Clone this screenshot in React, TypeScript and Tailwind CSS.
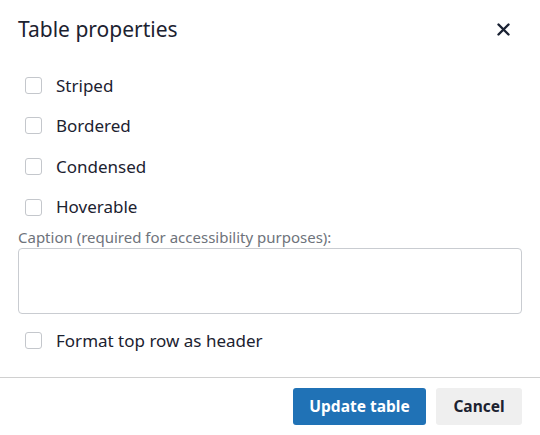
import React from "react";

function Check({ label }: { label: string }) {
  return (
    <label className="flex items-center h-[40.6px] pl-[25px]">
      <span className="w-[17px] h-[17px] rounded-[3px] border border-[#c4c7cc] bg-white shrink-0" />
      <span className="ml-[14px] text-[17px] text-[#1c2230]">{label}</span>
    </label>
  );
}

export default function App() {
  return (
    <div className="w-[540px] h-[435px] bg-white flex flex-col font-['Noto_Sans',sans-serif] text-[#1c2230]">
      <div className="flex items-center justify-between h-[58px] pl-[18px] pr-[30px]">
        <h1 className="text-[21px] leading-none">Table properties</h1>
        <svg width="13" height="13" viewBox="0 0 13 13" className="mt-[1px]">
          <path d="M1.5 1.5 L11.5 11.5 M11.5 1.5 L1.5 11.5" stroke="#1a2233" strokeWidth="2.4" strokeLinecap="round" />
        </svg>
      </div>
      <div className="flex flex-col mt-[7px]">
        <Check label="Striped" />
        <Check label="Bordered" />
        <Check label="Condensed" />
        <Check label="Hoverable" />
      </div>
      <div className="px-[18px]">
        <div className="text-[15px] leading-[20px] text-[#6e737b]">Caption (required for accessibility purposes):</div>
        <div className="h-[66px] mt-[1px] rounded-[4px] border border-[#c9ccd1]" />
      </div>
      <div className="mt-[6px]">
        <Check label="Format top row as header" />
      </div>
      <div className="mt-[16px] border-t border-[#d0d0d0]" />
      <div className="flex justify-end gap-[10px] pr-[18px] pt-[10px]">
        <button className="w-[133px] h-[37px] rounded-[3px] bg-[#2072b6] text-white text-[15.5px] font-bold">Update table</button>
        <button className="w-[86px] h-[37px] rounded-[3px] bg-[#efefef] text-[#1c2230] text-[15.5px] font-bold">Cancel</button>
      </div>
    </div>
  );
}
